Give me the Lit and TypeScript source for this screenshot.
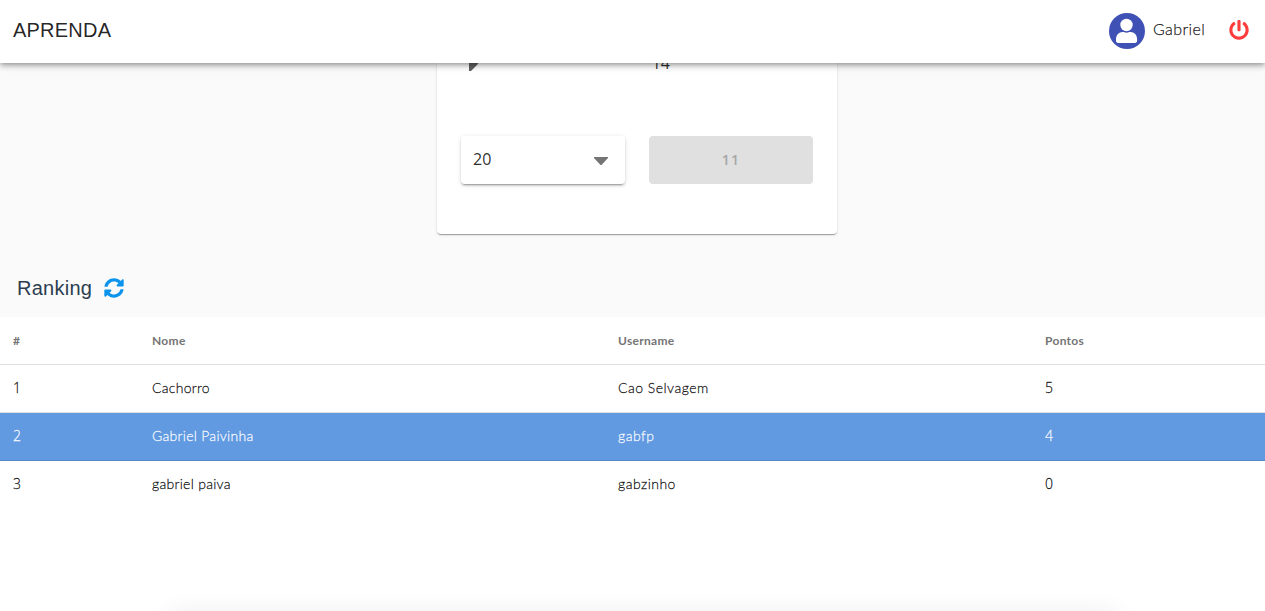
import { LitElement, html, css, svg } from "lit";
import { customElement, state } from "lit/decorators.js";
import { classMap } from "lit/directives/class-map.js";

interface Player {
  name: string;
  username: string;
  points: number;
}

const powerIcon = svg`<path d="M400 54.1c63 45 104 118.6 104 201.9 0 136.8-110.8 247.7-247.5 248C120 504.3 8.2 393 8 256.4 7.9 173.1 48.9 99.3 111.8 54.2c11.7-8.3 28-4.8 35 7.7L162.6 90c5.9 10.5 3.1 23.8-6.6 31-41.5 30.8-68 79.6-68 134.9-.1 92.3 74.5 168.1 168 168.1 91.6 0 168.6-74.2 168-169.1-.3-51.8-24.7-101.8-68.1-134-9.7-7.2-12.4-20.5-6.5-30.9l15.8-28.1c7-12.4 23.2-16.1 34.8-7.8zM296 264V24c0-13.3-10.7-24-24-24h-32c-13.3 0-24 10.7-24 24v240c0 13.3 10.7 24 24 24h32c13.3 0 24-10.7 24-24z"/>`;

const refreshIcon = svg`<path d="M370.72 133.28C339.458 104.008 298.888 87.962 255.848 88c-77.458.068-144.328 53.178-162.791 126.85-1.344 5.363-6.122 9.15-11.651 9.15H24.103c-7.498 0-13.194-6.807-11.807-14.176C33.933 94.924 134.813 8 256 8c66.448 0 126.791 26.136 171.315 68.685L463.03 40.97C478.149 25.851 504 36.559 504 57.941V192c0 13.255-10.745 24-24 24H345.941c-21.382 0-32.09-25.851-16.971-40.971l41.75-41.749zM32 296h134.059c21.382 0 32.09 25.851 16.971 40.971l-41.75 41.75c31.262 29.273 71.835 45.319 114.876 45.28 77.418-.07 144.315-53.144 162.787-126.849 1.344-5.363 6.122-9.15 11.651-9.15h57.304c7.498 0 13.194 6.807 11.807 14.176C478.067 417.076 377.187 504 256 504c-66.448 0-126.791-26.136-171.315-68.685L48.97 471.03C33.851 486.149 8 475.441 8 454.059V320c0-13.255 10.745-24 24-24z"/>`;

@customElement("app-header")
export class AppHeader extends LitElement {
  static styles = css`
    :host {
      display: flex;
      align-items: center;
      box-sizing: border-box;
      height: 63px;
      padding: 0 16px 2px 13px;
      background: #fff;
      color: rgba(0, 0, 0, 0.87);
      position: relative;
      z-index: 2;
      box-shadow: 0 2px 4px -1px rgba(0, 0, 0, 0.24), 0 4px 5px rgba(0, 0, 0, 0.14),
        0 1px 10px rgba(0, 0, 0, 0.12);
    }
    .brand {
      flex: 1;
      font: 20px/24px "Liberation Sans", Arial, sans-serif;
      letter-spacing: 0.22px;
      padding-bottom: 2px;
    }
    .avatar {
      width: 36px;
      height: 36px;
      margin-right: 8px;
    }
    .user {
      width: 76px;
      font: 300 16px/24px Lato, sans-serif;
      letter-spacing: 0.4px;
      -webkit-text-stroke: 0.25px currentColor;
      padding-bottom: 3px;
    }
    .power {
      width: 20px;
      height: 20px;
      fill: #ff3d3d;
      margin-bottom: 1px;
    }
  `;
  render() {
    return html`
      <div class="brand">APRENDA</div>
      <svg class="avatar" viewBox="0 0 36 36">
        <circle cx="18" cy="18" r="18" fill="#3f51b5" />
        <circle cx="17.5" cy="12" r="6.2" fill="#fff" />
        <path
          d="M7 26.5c0-4.6 3-7.4 6.6-7.4 1.5 0 2.3.7 4 .7s2.500-.7 4-.7c3.600 0 6.500 2.800 6.500 7.400v1.200c0 1.300-.9 2.200-2.200 2.200H9.200C7.900 29.900 7 29 7 27.700z"
          fill="#fff"
        />
      </svg>
      <span class="user">Gabriel</span>
      <svg class="power" viewBox="0 0 512 512">${powerIcon}</svg>
    `;
  }
}

@customElement("game-card")
export class GameCard extends LitElement {
  static styles = css`
    :host {
      display: block;
      box-sizing: border-box;
      width: 400px;
      height: 171px;
      padding: 0 24px;
      background: #fff;
      color: rgba(0, 0, 0, 0.84);
      border-radius: 0 0 4px 4px;
      font: 16px/24px "Open Sans", sans-serif;
      box-shadow: 0 2px 1px -1px rgba(0, 0, 0, 0.2), 0 1px 1px rgba(0, 0, 0, 0.14),
        0 1px 3px rgba(0, 0, 0, 0.12);
    }
    .score {
      display: flex;
      justify-content: space-between;
      height: 24px;
      margin-top: -12px;
      padding: 0 143px 0 8px;
    }
    .play {
      width: 14px;
      height: 20px;
      fill: #616161;
    }
    .controls {
      display: grid;
      grid-template-columns: 1fr 1fr;
      gap: 24px;
      margin-top: 61px;
    }
    .select,
    .answer {
      display: flex;
      align-items: center;
      box-sizing: border-box;
      height: 48px;
      border-radius: 4px;
    }
    .select {
      justify-content: space-between;
      padding: 0 17px 0 12px;
      box-shadow: 0 3px 1px -2px rgba(0, 0, 0, 0.2), 0 2px 2px rgba(0, 0, 0, 0.14),
        0 1px 5px rgba(0, 0, 0, 0.12);
    }
    .value {
      padding-bottom: 2px;
    }
    .caret {
      width: 14px;
      height: 8px;
      margin-top: 2px;
      fill: #757575;
    }
    .answer {
      justify-content: center;
      background: #e0e0e0;
      color: #a6a6a6;
      font-size: 14px;
      font-weight: 600;
      letter-spacing: 1.25px;
    }
  `;
  render() {
    return html`
      <div class="score">
        <svg class="play" viewBox="0 0 14 20"><path d="M0 0v20h2l6-6q4-4 0-8L2 0z" /></svg>
        <span>14</span>
      </div>
      <div class="controls">
        <div class="select">
          <span class="value">20</span>
          <svg class="caret" viewBox="0 0 14 8"><path d="M0 0h14v1L8 7.500q-1 1-2 0L0 1z" /></svg>
        </div>
        <div class="answer">11</div>
      </div>
    `;
  }
}

@customElement("ranking-table")
export class RankingTable extends LitElement {
  @state() private players: Player[] = [
    { name: "Cachorro", username: "Cao Selvagem", points: 5 },
    { name: "Gabriel Paivinha", username: "gabfp", points: 4 },
    { name: "gabriel paiva", username: "gabzinho", points: 0 },
  ];
  static styles = css`
    :host {
      display: block;
      background: #fff;
      color: rgba(0, 0, 0, 0.87);
      font: 300 14px/20px Lato, sans-serif;
    }
    .row {
      display: grid;
      grid-template-columns: 139px 466px 427px 1fr;
      box-sizing: border-box;
      height: 48px;
      padding: 0 0 1px 13px;
      align-items: center;
      border-bottom: 1px solid #e0e0e0;
      letter-spacing: 0.28px;
      -webkit-text-stroke: 0.28px currentColor;
    }
    .head {
      padding: 1px 0 0 13px;
      color: #757575;
      font-size: 12px;
      font-weight: 700;
      letter-spacing: 0.3px;
      -webkit-text-stroke: 0;
    }
    .wide {
      letter-spacing: 0.48px;
    }
    .num {
      font-family: "Open Sans", sans-serif;
    }
    .row:last-child {
      border-bottom-color: transparent;
    }
    .current {
      color: rgba(255, 255, 255, 0.9);
      background: #629ae2;
      border-bottom-color: #558ac8;
    }
  `;
  render() {
    return html`
      <div class="row head">
        <span>#</span><span>Nome</span><span>Username</span><span>Pontos</span>
      </div>
      ${this.players.map(
        (p, i) => html`<div class=${classMap({ row: true, current: p.username === "gabfp" })}>
          <span class="num">${i + 1}</span><span>${p.name}</span><span class="wide">${p.username}</span
          ><span class="num">${p.points}</span>
        </div>`,
      )}
    `;
  }
}

@customElement("app-root")
export class AppRoot extends LitElement {
  static styles = css`
    :host {
      display: flex;
      flex-direction: column;
      height: 611px;
      overflow: hidden;
      background: #fff;
    }
    .stage {
      box-sizing: border-box;
      height: 254px;
      padding: 0 0 0 437px;
      background: #fafafa;
      display: flex;
      flex-direction: column;
      justify-content: space-between;
    }
    .title {
      display: flex;
      align-items: center;
      gap: 12px;
      height: 58px;
      margin-left: -420px;
      font: 20px/24px "Liberation Sans", Arial, sans-serif;
      letter-spacing: 0.25px;
      color: #2c3e50;
    }
    .refresh {
      width: 20px;
      height: 20px;
      fill: #0c94ec;
    }
    .page {
      flex: 1;
    }
    .footer {
      flex: none;
      height: 40px;
      margin: 0 150px -42px 170px;
      box-shadow: 0 0 26px 0 rgba(0, 0, 0, 0.08);
    }
  `;
  render() {
    return html`
      <app-header></app-header>
      <div class="stage">
        <game-card></game-card>
        <div class="title">
          <span>Ranking</span>
          <svg class="refresh" viewBox="0 0 512 512">${refreshIcon}</svg>
        </div>
      </div>
      <div class="page"><ranking-table></ranking-table></div>
      <div class="footer"></div>
    `;
  }
}
